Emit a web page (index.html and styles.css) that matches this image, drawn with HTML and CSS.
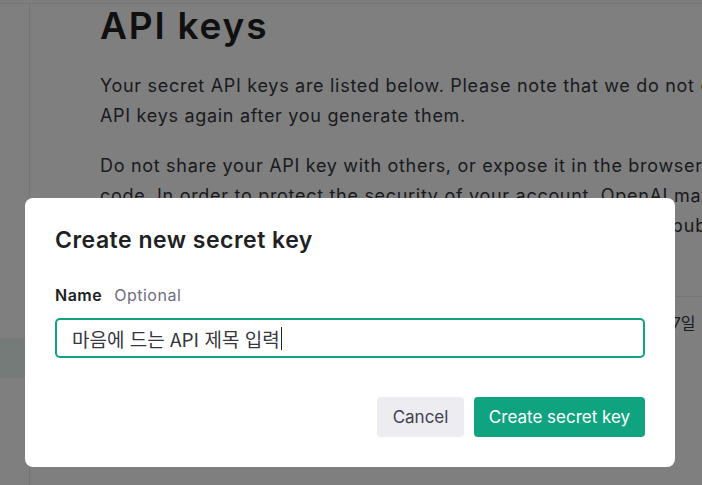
FILE: index.html
```html
<!DOCTYPE html>
<html lang="ko">
<head>
<meta charset="utf-8">
<title>API keys</title>
<link rel="stylesheet" href="styles.css">
</head>
<body>
<div class="app">
  <div class="topbar"></div>
  <div class="layout">
    <aside class="sidebar">
      <div class="nav-item"></div>
      <div class="nav-item"></div>
      <div class="nav-item"></div>
      <div class="nav-item"></div>
      <div class="nav-item"></div>
      <div class="nav-item"></div>
      <div class="nav-item active"></div>
    </aside>
    <main class="main">
      <h1 class="page-title">API keys</h1>
      <p class="lead">Your secret API keys are listed below. Please note that we do not display your secret<br>API keys again after you generate them.</p>
      <p class="lead">Do not share your API key with others, or expose it in the browser or other client-side<br>code. In order to protect the security of your account, OpenAI may also<br><span class="wide">automatically rotate any API key that we've found has leaked publicly.</span></p>
      <div class="keys-table">
        <div class="row head">
          <div class="cell c-name">NAME</div>
          <div class="cell c-key">KEY</div>
          <div class="cell c-created">CREATED</div>
          <div class="cell c-used">LAST USED</div>
        </div>
        <div class="row body">
          <div class="cell c-name">Secret key</div>
          <div class="cell c-key">sk-...aB3x</div>
          <div class="cell c-created">2023년 3월 7일</div>
          <div class="cell c-used">Never</div>
        </div>
      </div>
    </main>
  </div>
</div>

<div class="overlay">
  <div class="modal" role="dialog">
    <h2 class="modal-title">Create new secret key</h2>
    <div class="field-label"><span class="label-main">Name</span><span class="label-opt">Optional</span></div>
    <div class="text-input"><span class="input-value">마음에 드는 API 제목 입력</span><span class="caret"></span></div>
    <div class="actions">
      <button class="btn btn-neutral" type="button">Cancel</button>
      <button class="btn btn-primary" type="button">Create secret key</button>
    </div>
  </div>
</div>
</body>
</html>
```

FILE: styles.css
```css
* { box-sizing: border-box; }

html, body {
  margin: 0;
  padding: 0;
  height: 100%;
  overflow: hidden;
  background: #ffffff;
}

body {
  font-family: Inter, "Noto Sans CJK KR", "Noto Sans", sans-serif;
  color: #353740;
}

.app {
  height: 100%;
  display: flex;
  flex-direction: column;
}

.topbar {
  height: 4px;
  border-bottom: 1px solid #e6e6ea;
  flex: none;
}

.layout {
  flex: 1;
  display: flex;
  min-height: 0;
}

.sidebar {
  width: 30px;
  flex: none;
  border-right: 1px solid #e6e6ea;
  display: flex;
  flex-direction: column;
  padding-top: 94px;
}

.nav-item {
  height: 40px;
  flex: none;
}

.nav-item.active {
  background: #e8f6f2;
}

.main {
  flex: 1;
  padding-left: 70px;
  white-space: nowrap;
  overflow: hidden;
}

.page-title {
  margin: 0;
  font-size: 37px;
  line-height: 44px;
  font-weight: 600;
  color: #202123;
  letter-spacing: 1.8px;
}

.lead {
  margin: 23px 0 0;
  font-size: 18px;
  line-height: 30px;
  letter-spacing: 0.7px;
  color: #353740;
}

.lead .wide {
  letter-spacing: 0.84px;
}

.lead + .lead {
  margin-top: 20px;
}

.keys-table {
  margin-top: 8px;
}

.row {
  display: flex;
  align-items: center;
  height: 48px;
  font-size: 16px;
  color: #353740;
}

.row.head {
  border-bottom: 1px solid #ececf1;
  font-size: 13px;
  font-weight: 600;
  color: #6e6e80;
}

.row.body {
  height: 50px;
}

.cell { flex: none; }
.c-name { width: 170px; }
.c-key { width: 170px; }
.c-created { width: 160px; padding-left: 144px; font-family: Inter, "Noto Sans CJK KR", sans-serif; }
.c-used { width: 120px; }

/* Modal */
.overlay {
  position: fixed;
  inset: 0;
  background: rgba(0, 0, 0, 0.5);
  padding: 198px 0 0 25px;
}

.modal {
  width: 650px;
  background: #ffffff;
  border-radius: 8px;
  padding: 28px 30px 30px;
}

.modal-title {
  margin: 0;
  font-size: 23px;
  line-height: 28px;
  font-weight: 600;
  letter-spacing: 0.5px;
  color: #202123;
}

.field-label {
  margin-top: 31px;
  display: flex;
  gap: 12px;
  font-size: 16px;
  line-height: 20px;
  letter-spacing: 0.5px;
}

.label-main {
  font-weight: 600;
  color: #202123;
}

.label-opt {
  color: #6e6e80;
}

.text-input {
  margin-top: 13px;
  height: 40px;
  border: 2px solid #10a37f;
  border-radius: 5px;
  padding: 0 15px;
  display: flex;
  align-items: center;
  font-family: "Noto Sans CJK KR", sans-serif;
  font-size: 19px;
  color: #353740;
}

.caret {
  display: inline-block;
  width: 1px;
  height: 23px;
  margin-left: 1px;
  background: #202123;
}

.actions {
  margin-top: 39px;
  display: flex;
  justify-content: flex-end;
  gap: 10px;
}

.btn {
  height: 40px;
  border: 0;
  border-radius: 4px;
  padding: 0;
  font-family: Inter, sans-serif;
  font-size: 17px;
  cursor: pointer;
}

.btn-neutral {
  width: 87px;
  background: #ececf1;
  color: #40414f;
}

.btn-primary {
  width: 171px;
  background: #10a37f;
  color: #ffffff;
}
```
